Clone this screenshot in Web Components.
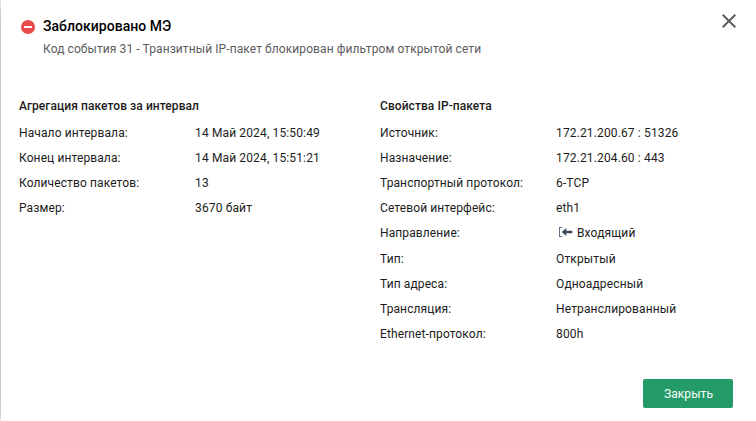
<!DOCTYPE html>
<html lang="ru">
<head>
<meta charset="utf-8">
<title>Заблокировано МЭ</title>
<style>
    body {
        margin: 0;
        background: #fff;
        font-family: Roboto, "Liberation Sans", sans-serif;
    }
</style>
</head>
<body>
<event-dialog>
    <event-header slot="header">
        <span slot="title">Заблокировано МЭ</span>
        Код события 31 - Транзитный IP-пакет блокирован фильтром открытой сети
    </event-header>
    <property-group heading="Агрегация пакетов за интервал">
        <property-row label="Начало интервала:">14 Май 2024, 15:50:49</property-row>
        <property-row label="Конец интервала:">14 Май 2024, 15:51:21</property-row>
        <property-row label="Количество пакетов:">13</property-row>
        <property-row label="Размер:">3670 байт</property-row>
    </property-group>
    <property-group heading="Свойства IP-пакета">
        <property-row label="Источник:">172.21.200.67 : 51326</property-row>
        <property-row label="Назначение:">172.21.204.60 : 443</property-row>
        <property-row label="Транспортный протокол:">6-TCP</property-row>
        <property-row label="Сетевой интерфейс:">eth1</property-row>
        <property-row label="Направление:" class="tall"><incoming-icon></incoming-icon>Входящий</property-row>
        <property-row label="Тип:">Открытый</property-row>
        <property-row label="Тип адреса:">Одноадресный</property-row>
        <property-row label="Трансляция:">Нетранслированный</property-row>
        <property-row label="Ethernet-протокол:">800h</property-row>
    </property-group>
    <action-button slot="footer">Закрыть</action-button>
</event-dialog>

<script>
function define(name, html) {
    const template = document.createElement("template");
    template.innerHTML = html;

    customElements.define(name, class extends HTMLElement {
        constructor() {
            super();
            this.attachShadow({ mode: "open" });
            this.shadowRoot.appendChild(template.content.cloneNode(true));
        }

        // copies attributes into the elements marked with data-attr
        connectedCallback() {
            this.shadowRoot.querySelectorAll("[data-attr]").forEach(node => {
                node.textContent = this.getAttribute(node.dataset.attr);
            });
        }
    });
}

define("event-dialog", `<style>
    :host {
        display: flex;
        flex-direction: column;
        box-sizing: border-box;
        width: 756px;
        height: 421px;
        padding: 13px 20px 13px 19px;
        background: linear-gradient(#e6e6e6, #c8c8c8 20px, #c8c8c8 400px, #dedede) left / 1px 100% no-repeat;
        overflow: hidden;
    }
    header { display: flex; justify-content: space-between; height: 81px; }
    main { display: grid; grid-template-columns: 361px 1fr; flex: 1; }
    footer { display: flex; justify-content: flex-end; padding-right: 3px; }
    </style>
    <header><slot name="header"></slot><close-icon></close-icon></header>
    <main><slot></slot></main>
    <footer><slot name="footer"></slot></footer>`);

define("event-header", `<style>
    :host {
        display: grid;
        grid-template-columns: 24px 1fr;
        grid-template-rows: 26px 20px;
        align-items: center;
        color: #5c5c60;
        font-size: 12px;
        letter-spacing: 0.09px;
        white-space: nowrap;
    }
    svg { display: block; margin: 2px 0 0 2px; }
    h1 { margin: 0; color: #000; font-size: 14px; font-weight: 500; letter-spacing: 0.03px; }
    p { grid-column: 2; margin: 0; }
    </style>
    <svg width="14" height="14" viewBox="0 0 14 14">
        <circle cx="7" cy="7" r="7" fill="#e94b4b"/>
        <path d="M3 6h8v2H3z" fill="#fff"/>
    </svg>
    <h1><slot name="title"></slot></h1>
    <p><slot></slot></p>`);

define("close-icon", `<style>
    :host { display: block; padding-top: 1px; }
    svg { display: block; }
    </style>
    <svg width="14" height="14" viewBox="0 0 14 14">
        <path d="M.7.7l12.6 12.6M13.3.7L.7 13.3" stroke="#5c5c60" stroke-width="2"/>
    </svg>`);

define("property-group", `<style>
    :host {
        display: block;
        color: #1c1c20;
        font-size: 12px;
        letter-spacing: 0.11px;
        white-space: nowrap;
    }
    h2 { margin: 0 0 3px; font-size: 12px; font-weight: 500; line-height: 24px; letter-spacing: 0.07px; }
    </style>
    <h2 data-attr="heading"></h2>
    <slot></slot>`);

define("property-row", `<style>
    :host { display: grid; grid-template-columns: 176px 1fr; height: 25px; line-height: 25px; }
    :host(.tall) { height: 26px; }
    .value { letter-spacing: 0.14px; }
    </style>
    <span data-attr="label"></span>
    <span class="value"><slot></slot></span>`);

define("incoming-icon", `<style>
    :host { display: inline-block; width: 21px; }
    svg { display: block; margin-left: 3px; }
    </style>
    <svg width="14" height="10" viewBox="0 0 14 10" fill="#3d4a63">
        <path d="M0 0h3v1H1v8h2v1H0z" opacity=".8"/>
        <path d="M3 5l4-3.5V4h6v2H7v2.5z" stroke="#3d4a63" stroke-width=".5"/>
    </svg>`);

define("action-button", `<style>
    :host { display: block; }
    button {
        display: block;
        width: 90px;
        height: 29px;
        padding: 0 0 0 1px;
        border: 0;
        border-radius: 2px;
        background: #249b69;
        color: #fff;
        font: 12px Roboto, "Liberation Sans", sans-serif;
        letter-spacing: 0.1px;
    }
    </style>
    <button type="button"><slot></slot></button>`);
</script>
</body>
</html>
